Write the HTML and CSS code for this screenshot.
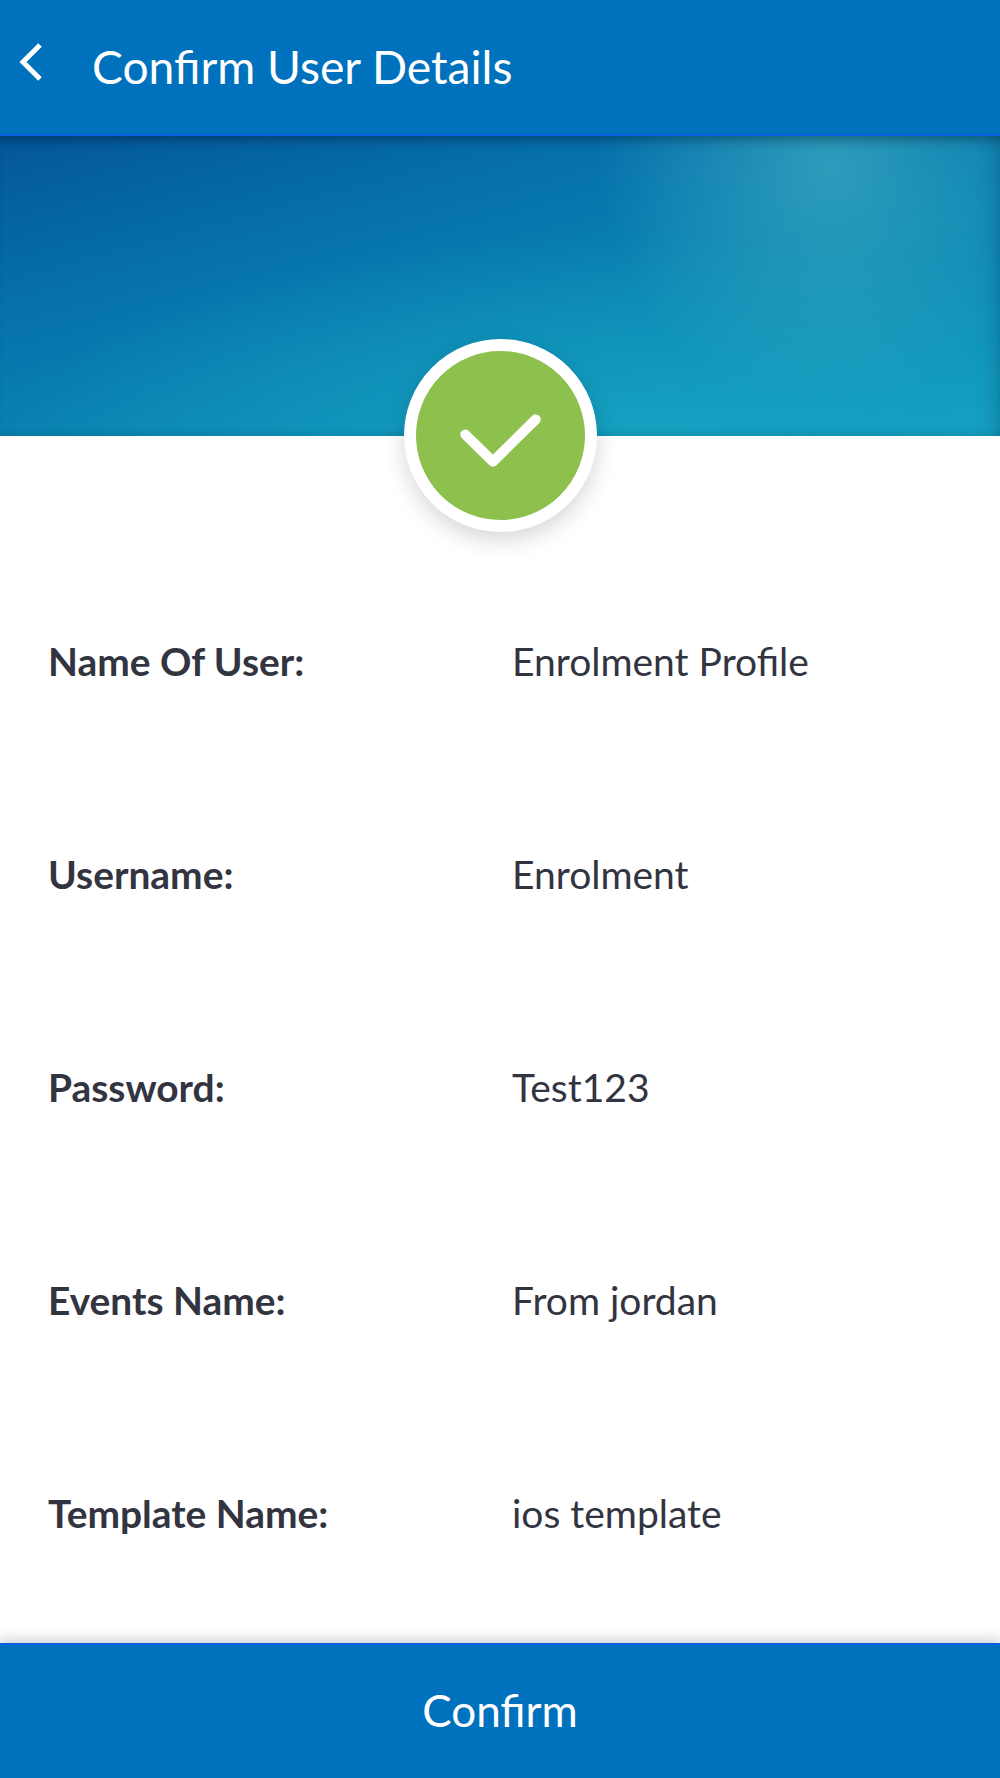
FILE: index.html
```html
<!DOCTYPE html>
<html lang="en">
<head>
<meta charset="utf-8">
<title>Confirm User Details</title>
<link rel="stylesheet" href="styles.css">
</head>
<body>
<div class="app">
  <header class="topbar">
    <svg class="back" viewBox="0 0 24 38" aria-hidden="true"><path d="M21 2 L4 19 L21 36"/></svg>
    <h1 class="title">Confirm User Details</h1>
  </header>
  <section class="hero">
    <div class="badge">
      <svg class="tick" viewBox="0 0 168 168" aria-hidden="true"><path d="M49 83 L76.5 110 L119 68"/></svg>
    </div>
  </section>
  <main class="details">
    <div class="row"><span class="label">Name Of User:</span><span class="value">Enrolment Profile</span></div>
    <div class="row"><span class="label">Username:</span><span class="value">Enrolment</span></div>
    <div class="row"><span class="label">Password:</span><span class="value">Test123</span></div>
    <div class="row"><span class="label">Events Name:</span><span class="value">From jordan</span></div>
    <div class="row"><span class="label">Template Name:</span><span class="value">ios template</span></div>
  </main>
  <footer class="action">Confirm</footer>
</div>
</body>
</html>
```
FILE: styles.css
```css
* { box-sizing: border-box; }
html, body { margin: 0; padding: 0; background: #fff; }
.app {
  width: 1000px;
  height: 1778px;
  display: flex;
  flex-direction: column;
  overflow: hidden;
  font-family: Lato, "Open Sans", sans-serif;
  color: #32343f;
}
.topbar {
  height: 136px;
  flex: none;
  display: flex;
  align-items: center;
  padding: 0 0 2px 19px;
  background: #0071bc;
  border-bottom: 2px solid #0860e6;
  position: relative;
  z-index: 2;
}
.back { width: 24px; height: 38px; margin-top: -8px; flex: none; }
.back path { fill: none; stroke: #fff; stroke-width: 5; }
.title {
  margin: 0 0 0 49px;
  font-size: 46.2px;
  font-weight: 400;
  color: #fff;
}
.hero {
  height: 300px;
  flex: none;
  position: relative;
  background:
    radial-gradient(ellipse 230px 240px at 83% 10%, rgba(60,170,192,.7), rgba(60,170,192,0) 100%),
    radial-gradient(ellipse 640px 200px at 65% 100%, rgba(26,168,196,.65), rgba(26,168,196,0) 100%),
    linear-gradient(165deg, #04569a 0%, #0670ac 30%, #0a86b3 60%, #129cbf 100%);
  box-shadow: inset 0 14px 12px -10px rgba(0,0,0,.32), inset 0 -6px 8px -6px rgba(0,0,0,.14), inset -18px 0 20px -14px rgba(0,40,90,.25);
}
.badge {
  position: absolute;
  left: 403.5px;
  top: 203px;
  width: 193px;
  height: 193px;
  border-radius: 50%;
  border: 12.5px solid #fff;
  background: #8dc04d;
  box-shadow: 0 8px 22px rgba(0,0,0,.16);
  display: flex;
}
.tick { width: 100%; height: 100%; }
.tick path { fill: none; stroke: #fff; stroke-width: 10; stroke-linecap: round; stroke-linejoin: round; }
.details {
  flex: 1;
  min-height: 0;
  display: flex;
  flex-direction: column;
  gap: 166px;
  padding: 202px 0 0 48px;
}
.row {
  display: flex;
  align-items: flex-start;
  font-size: 39px;
  line-height: 47px;
}
.label { width: 464px; font-weight: 700; font-size: 38.9px; }
.value { font-weight: 400; }
.action {
  height: 135px;
  flex: none;
  display: flex;
  align-items: center;
  justify-content: center;
  padding-bottom: 4px;
  font-size: 44px;
  color: #fff;
  background: #0071bc;
  border-top: 2px solid #0860e6;
  box-shadow: 0 -6px 10px rgba(0,0,0,.14);
  position: relative;
}
```
